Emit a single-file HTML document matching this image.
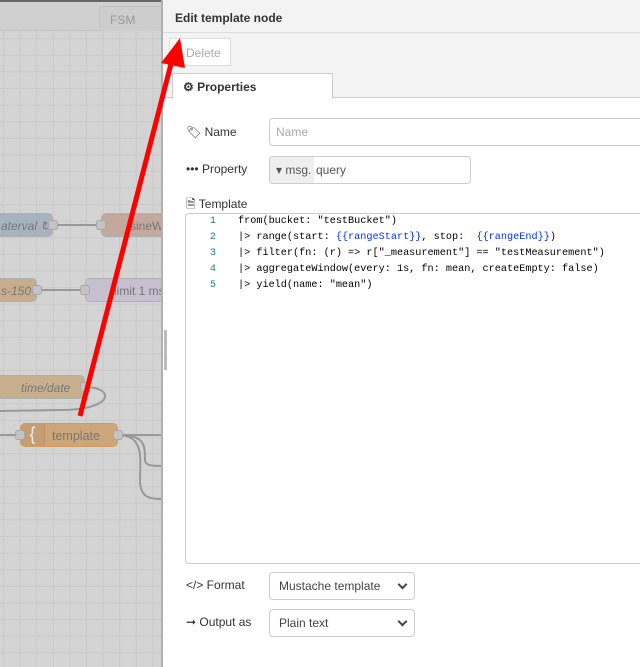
<!DOCTYPE html>
<html><head><meta charset="utf-8"><style>
*{box-sizing:border-box;margin:0;padding:0}
body{width:640px;height:667px;overflow:hidden;position:relative;font-family:"Liberation Sans",Arial,sans-serif;font-size:12px;color:#333;background:#d3d3d3}
.canvas{position:absolute;left:0;top:0;width:162px;height:667px;background-color:#d4d4d4;
background-image:linear-gradient(to right,#cacaca 1px,transparent 1px),linear-gradient(to bottom,#cacaca 1px,transparent 1px);background-size:16.6px 16.6px;background-position:3px 5px}
.tabbar{position:absolute;left:0;top:0;width:162px;height:31px;background:#d0d0d0;border-bottom:1px solid #c4c4c4}
.fsm{position:absolute;left:99px;top:6px;width:63px;height:25px;background:#cdcdcd;border:1px solid #c2c2c2;border-bottom:none;color:#999;font-size:12px;padding:6px 0 0 10px}
.node{position:absolute;height:24px;border-radius:5px;border:1px solid #b0b0b0;font-size:12px;color:#777;padding:5px 0 0 0;white-space:nowrap;overflow:hidden}
.port{position:absolute;width:10px;height:10px;background:#c4c4c4;border:1px solid #a8a8a8;border-radius:3px}
.panel{position:absolute;left:161px;top:0;width:479px;height:667px;background:#fff;border-left:2px solid #b0b0b0}
.hdr{position:absolute;left:0;top:0;width:100%;height:33px;background:#f3f3f3;border-bottom:1px solid #ddd;font-weight:bold;font-size:12px;padding:11px 0 0 12px;color:#333}
.bar{position:absolute;left:0;top:33px;width:100%;height:65px;background:#f3f3f3;border-bottom:1px solid #ccc}
.del{position:absolute;left:6px;top:5px;width:62px;height:28px;background:#fff;border:1px solid #ddd;color:#aaa;padding:7px 0 0 16px}
.tab{position:absolute;left:9px;top:40px;width:161px;height:26px;background:#fff;border:1px solid #ccc;border-bottom:none;font-weight:bold;padding:6px 0 0 10px}
.lbl{position:absolute;left:23px;font-size:12px;color:#333}
.inp{position:absolute;left:106px;height:28px;border:1px solid #ccc;border-radius:4px;background:#fff;padding:6px 0 0 6px;color:#555}
.ed{position:absolute;left:22px;top:213px;width:470px;height:351px;border:1px solid #ccc;border-radius:4px;font-family:"Liberation Mono",monospace;font-size:10.2px}
.ln{position:absolute;left:0;width:30px;text-align:right;color:#237893}
.cd{position:absolute;left:52px;white-space:pre;color:#000}
.b{color:#0431fa}
.sel{position:absolute;left:106px;width:146px;height:28px;border:1px solid #ccc;border-radius:4px;padding:6px 0 0 9px;color:#444}
.sel:after{content:"";position:absolute;right:8px;top:8px;width:5px;height:5px;border-right:2px solid #444;border-bottom:2px solid #444;transform:rotate(45deg)}
</style></head><body>
<div class="canvas"></div>
<div class="tabbar"></div>
<div class="fsm">FSM</div>
<div style="position:absolute;left:0;top:0;width:640px;height:2px;background:#666"></div>

<svg style="position:absolute;left:0;top:0" width="162" height="667">
<path d="M53 225 H101" stroke="#999" stroke-width="2" fill="none"/>
<path d="M37 290 H85" stroke="#999" stroke-width="2" fill="none"/>
<path d="M85 387 C115 387 115 410 60 410 L0 411" stroke="#999" stroke-width="2" fill="none"/>
<path d="M0 435 H20" stroke="#999" stroke-width="2" fill="none"/>
<path d="M118 435 H162" stroke="#999" stroke-width="2" fill="none"/>
<path d="M118 435 C145 435 145 445 145 460 C145 465 150 466 162 466" stroke="#999" stroke-width="2" fill="none"/>
<path d="M118 435 C145 435 140 460 140 480 C140 498 150 499 162 499" stroke="#999" stroke-width="2" fill="none"/>
</svg>
<div class="node" style="left:-10px;top:213px;width:63px;background:#a7b4c0"><span style="font-style:italic;padding-left:10px">aterval ↻</span></div>
<div class="node" style="left:101px;top:213px;width:70px;background:#c3a99d;padding-left:28px">sineW</div>
<div class="node" style="left:-10px;top:278px;width:47px;background:#c6ad8b"><span style="font-style:italic;padding-left:10px">s-150</span></div>
<div class="node" style="left:85px;top:278px;width:80px;background:#c5c1d0;padding-left:28px">limit 1 ms</div>
<div class="node" style="left:-10px;top:375px;width:95px;background:#c8b08f"><span style="font-style:italic;padding-left:30px">time/date</span></div>
<div class="node" style="left:20px;top:423px;width:98px;background:#cda77a;border-color:#d79b5a;padding-left:31px;color:#777;font-size:12.5px"><span style="position:absolute;left:0;top:0;width:24px;height:22px;background:#c59f74;border-right:1px solid #b89066;border-radius:4px 0 0 4px;color:#eee;font-size:18px;text-align:center;line-height:21px">{</span>template</div>
<div class="port" style="left:48px;top:220px"></div><div class="port" style="left:96px;top:220px"></div>
<div class="port" style="left:32px;top:285px"></div><div class="port" style="left:80px;top:285px"></div>
<div class="port" style="left:80px;top:382px"></div>
<div class="port" style="left:15px;top:430px"></div><div class="port" style="left:113px;top:430px"></div>

<div class="panel">
<div class="hdr">Edit template node</div>
<div class="bar"><div class="del">Delete</div><div class="tab">⚙ Properties</div></div>
<div class="lbl" style="top:125px">🏷 Name</div>
<div class="inp" style="top:118px;width:380px;color:#aaa">Name</div>
<div class="lbl" style="top:162px">••• Property</div>
<div class="inp" style="top:156px;width:202px;padding:0;overflow:hidden"><span style="display:inline-block;background:#efefef;width:44px;height:26px;padding:6px 0 0 6px;color:#555">▾ msg.</span><span style="padding-left:2px">query</span></div>
<div class="lbl" style="top:195px">🗎 Template</div>
<div class="ed">
<div class="ln" style="top:2px">1</div><div class="cd" style="top:2px">from(bucket: "testBucket")</div>
<div class="ln" style="top:18px">2</div><div class="cd" style="top:18px">|&gt; range(start: <span class="b">{{rangeStart}}</span>, stop:  <span class="b">{{rangeEnd}}</span>)</div>
<div class="ln" style="top:34px">3</div><div class="cd" style="top:34px">|&gt; filter(fn: (r) =&gt; r["_measurement"] == "testMeasurement")</div>
<div class="ln" style="top:50px">4</div><div class="cd" style="top:50px">|&gt; aggregateWindow(every: 1s, fn: mean, createEmpty: false)</div>
<div class="ln" style="top:66px">5</div><div class="cd" style="top:66px">|&gt; yield(name: "mean")</div>
</div>
<div class="lbl" style="top:578px">&lt;/&gt; Format</div>
<div class="sel" style="top:572px">Mustache template</div>
<div class="lbl" style="top:615px">➞ Output as</div>
<div class="sel" style="top:609px">Plain text</div>
<div style="position:absolute;left:1px;top:330px;width:3px;height:40px;background:#bbb"></div>
</div>

<svg style="position:absolute;left:0;top:0" width="640" height="667">
<line x1="80" y1="416" x2="172" y2="60" stroke="#f00" stroke-width="5"/>
<polygon points="180,38 161,63 185,68" fill="#f00"/>
</svg>
</body></html>
